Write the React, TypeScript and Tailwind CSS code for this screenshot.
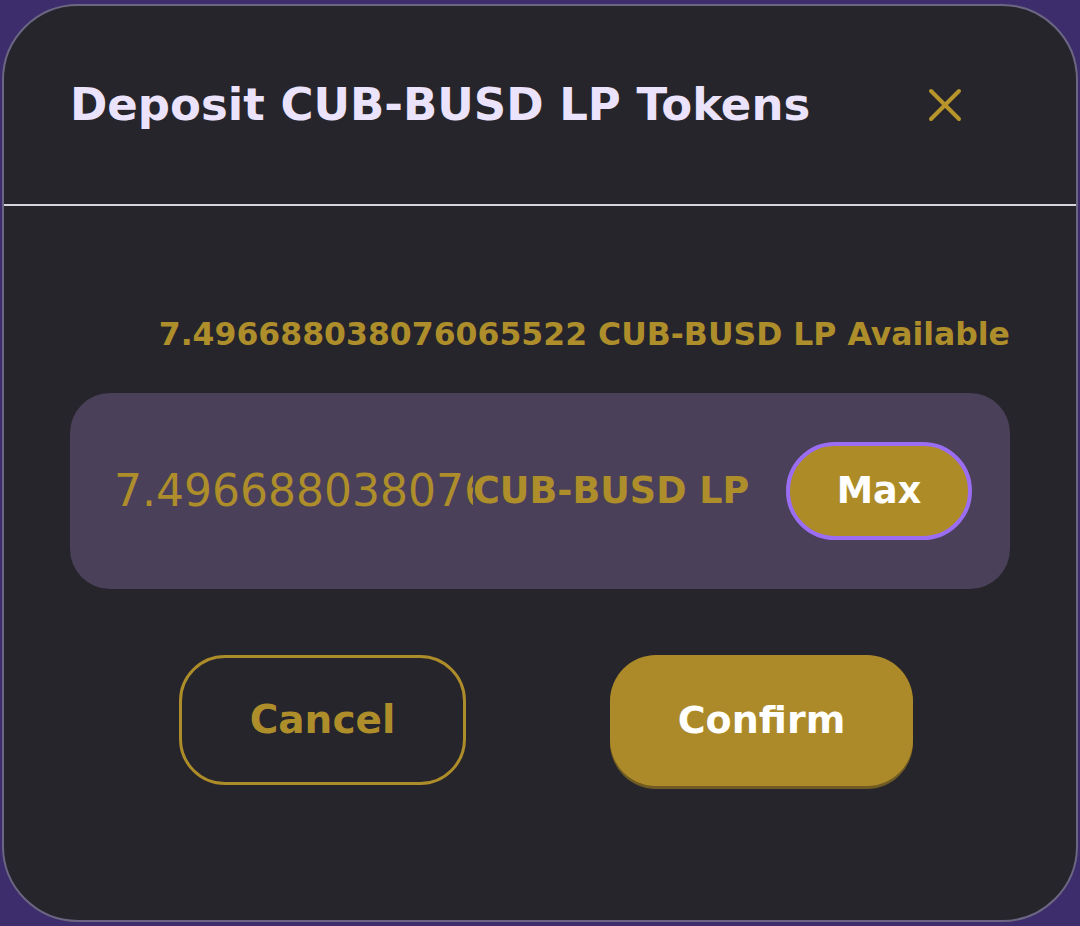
import { useState } from "react";

const gold = "text-[#ae8e2b]";

export default function App() {
    const [amount, setAmount] = useState("7.496688038076065522");

    return (
        <div className="min-h-[926px] w-full bg-[#3e2d6c] pt-[4px] px-[2px] font-['DejaVu_Sans',sans-serif]">
            <div className="h-[918px] w-full rounded-[76px] border-2 border-[#6b6682] bg-[#26252b] flex flex-col">
                {/* Header */}
                <div className="h-[198px] flex items-center justify-between pl-[66px] pr-[114px]">
                    <h2 className="text-[45px] font-bold text-[#ebe3fb]">
                        Deposit CUB-BUSD LP Tokens
                    </h2>
                    <button className="w-[34px] h-[34px] flex items-center justify-center">
                        <svg viewBox="0 0 34 34" className="w-[34px] h-[34px]" fill="none" stroke="#b8952b" strokeWidth="4" strokeLinecap="round">
                            <path d="M3 3 L31 31 M31 3 L3 31" />
                        </svg>
                    </button>
                </div>
                <div className="h-[2px] bg-[#d6d4dc]" />

                {/* Available */}
                <div className="mt-[108px] pr-[66px] flex justify-end">
                    <p className={`text-[31.5px] font-bold leading-[40px] ${gold}`}>
                        7.496688038076065522 CUB-BUSD LP Available
                    </p>
                </div>

                {/* Input */}
                <div className="mt-[39px] mx-[66px] h-[196px] rounded-[40px] bg-[#4a4059] flex items-center pl-[44px] pr-[38px]">
                    <input
                        value={amount}
                        onChange={(e) => setAmount(e.target.value)}
                        className={`w-[359px] bg-transparent outline-none text-[44px] ${gold}`}
                    />
                    <span className={`text-[36.5px] font-bold whitespace-nowrap ${gold}`}>CUB-BUSD LP</span>
                    <button className="ml-auto w-[186px] h-[98px] rounded-full border-[4px] border-[#9a6df2] bg-[#ad8c28] text-white text-[36.5px] font-bold">
                        Max
                    </button>
                </div>

                {/* Actions */}
                <div className="mt-[66px] flex pl-[175px] gap-[144px]">
                    <button className={`w-[287px] h-[130px] rounded-[46px] border-[3px] border-[#ad8c2a] text-[39px] font-bold ${gold}`}>
                        Cancel
                    </button>
                    <button className="w-[303px] h-[131px] rounded-[46px] bg-[#ac8a29] shadow-[0_3px_0_#6e5a22] text-white text-[38px] font-bold">
                        Confirm
                    </button>
                </div>
            </div>
        </div>
    );
}
